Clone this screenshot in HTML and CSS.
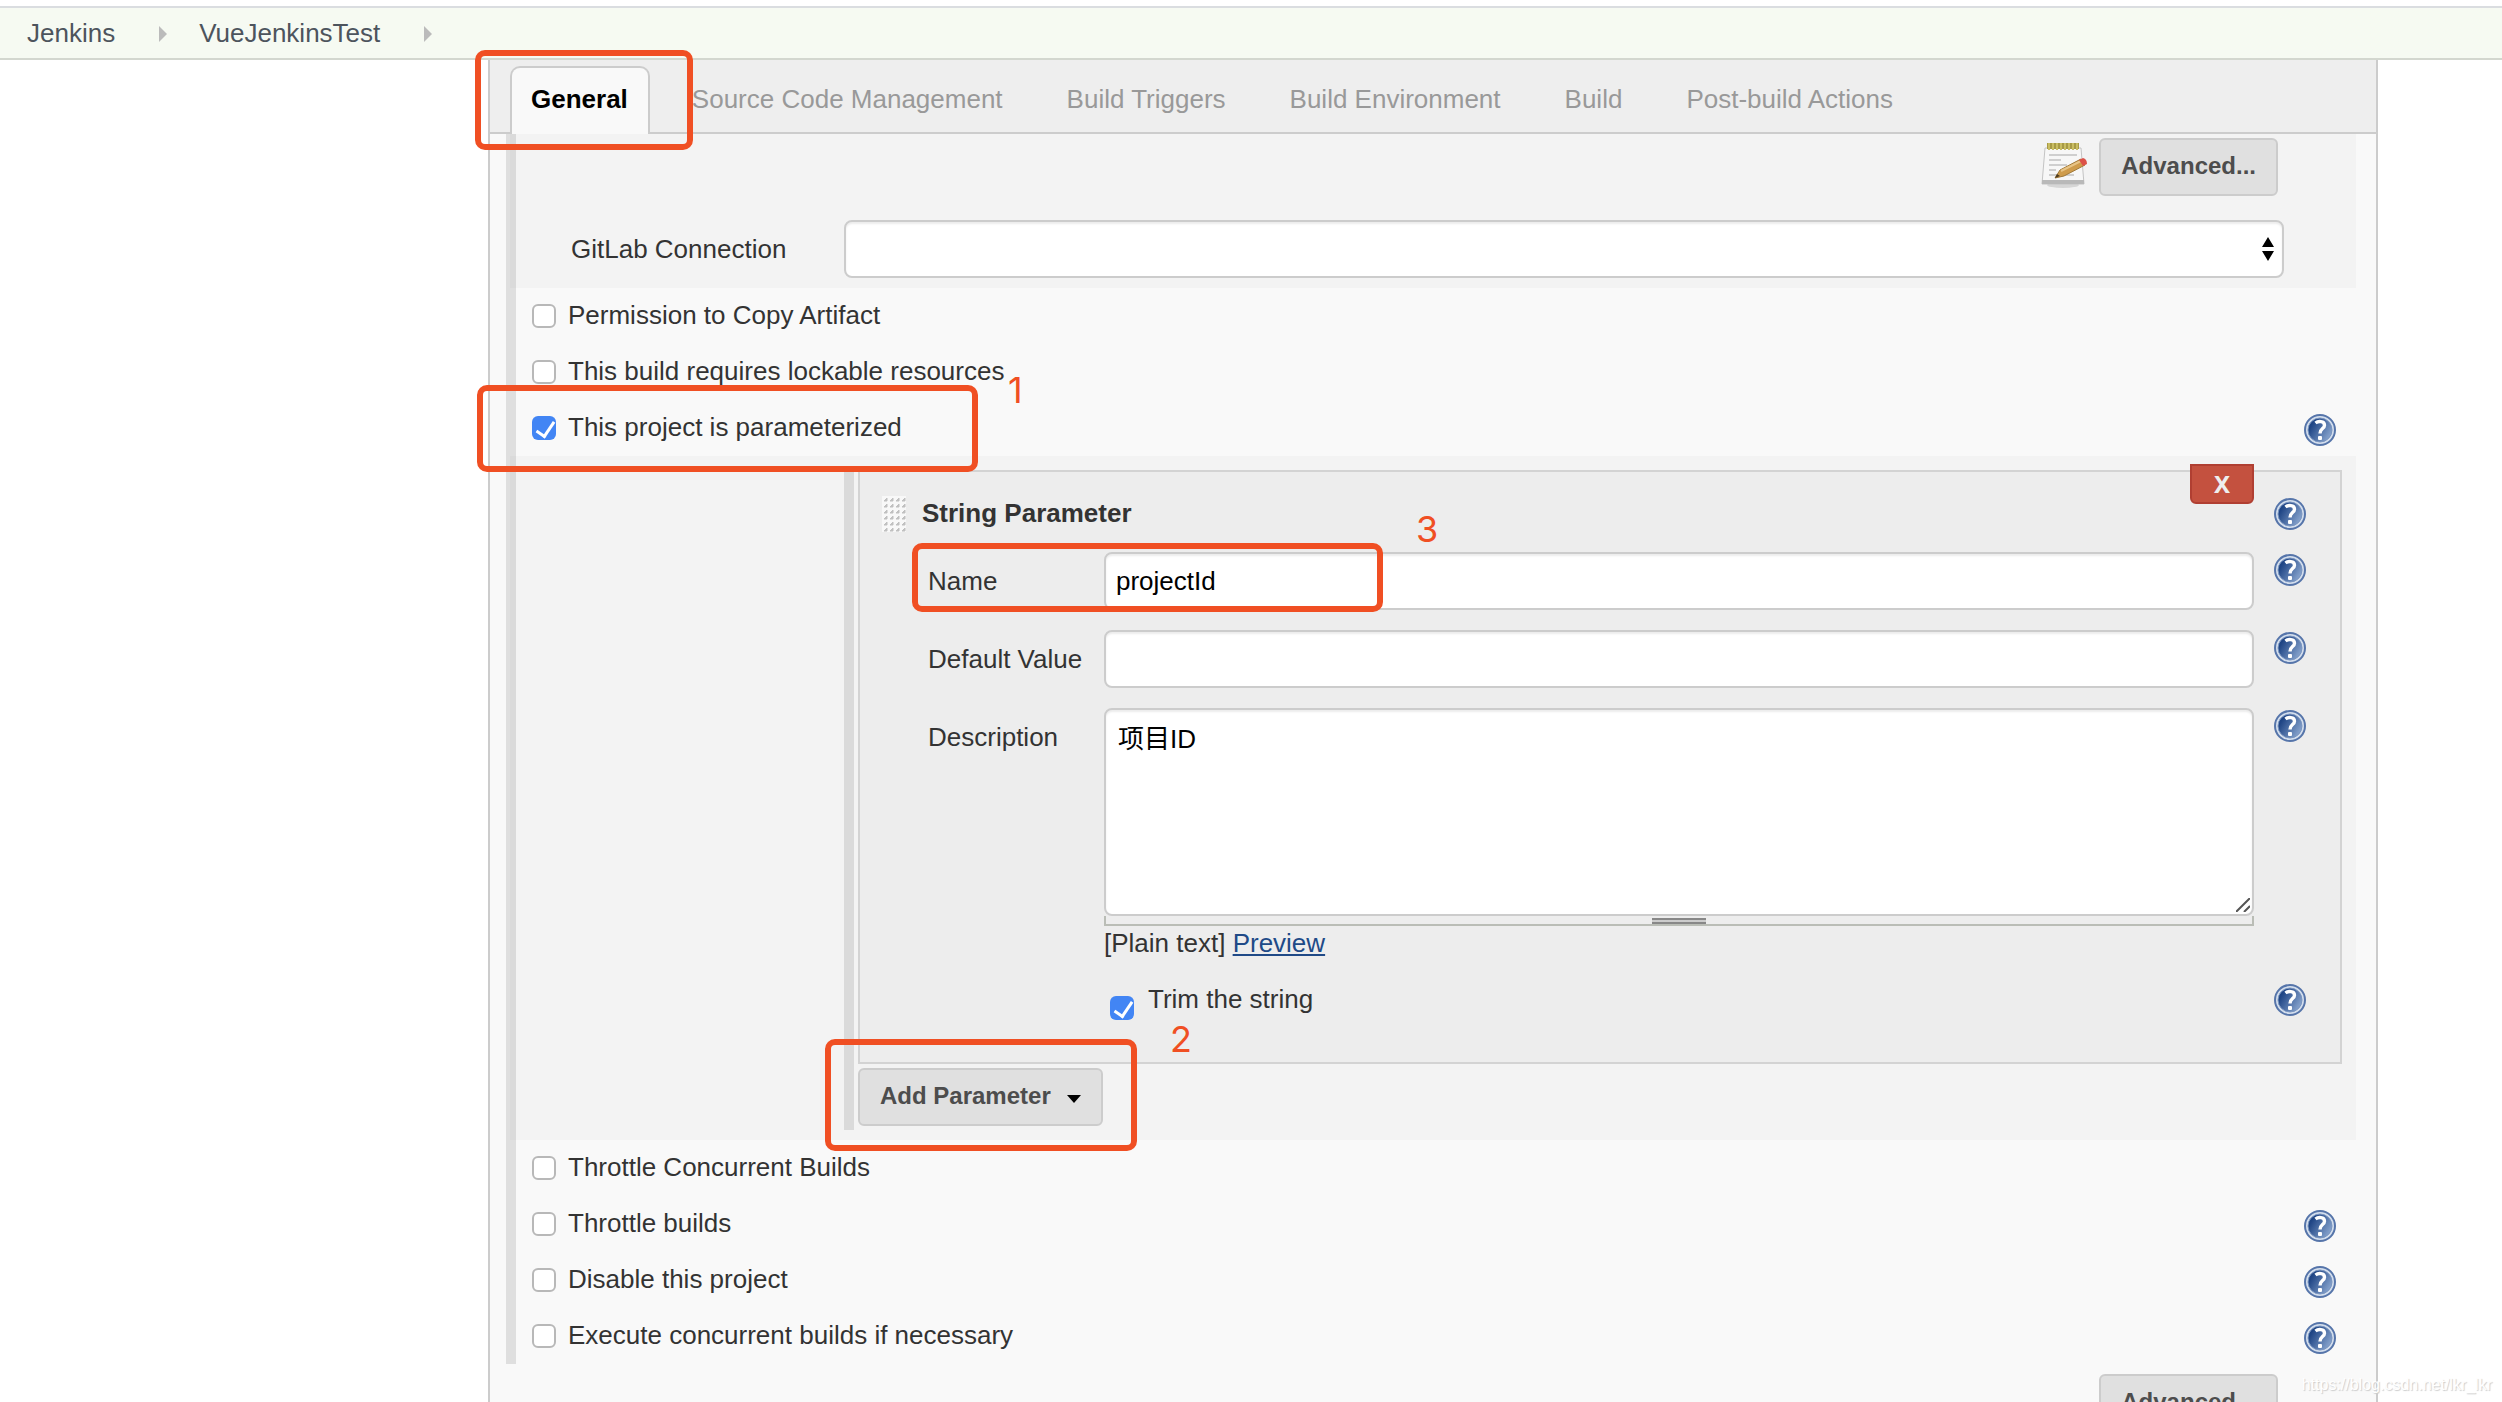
FILE: index.html
```html
<!DOCTYPE html>
<html lang="en">
<head>
<meta charset="utf-8">
<title>VueJenkinsTest Config [Jenkins]</title>
<link rel="stylesheet" href="styles.css">
</head>
<body>
<svg class="defs" aria-hidden="true">
  <defs>
    <linearGradient id="help-fill" x1="0" y1="0.2" x2="1" y2="0.8">
      <stop offset="0.15" stop-color="#1f4585"/>
      <stop offset="1" stop-color="#8fabd3"/>
    </linearGradient>
    <symbol id="help" viewBox="0 0 32 32">
      <circle cx="16" cy="16" r="15" fill="#d3deed" stroke="#5675aa" stroke-width="2"/>
      <circle cx="16" cy="16" r="12" fill="url(#help-fill)" stroke="#7a95c0" stroke-width="1"/>
      <path d="M11.500 9C14 7 20.500 6.600 20.500 11.200C20.500 14.800 16 14.500 16 19.500" fill="none" stroke="#fff" stroke-width="3.400"/>
      <rect x="14" y="22" width="4" height="4" rx="1" fill="#fff"/>
    </symbol>
  </defs>
</svg>

<nav class="breadcrumbs" aria-label="Breadcrumb">
  <a href="#">Jenkins</a>
  <svg class="crumb-arrow" viewBox="0 0 8 16" aria-hidden="true"><path d="M0 0L8 8L0 16Z"/></svg>
  <a href="#">VueJenkinsTest</a>
  <svg class="crumb-arrow" viewBox="0 0 8 16" aria-hidden="true"><path d="M0 0L8 8L0 16Z"/></svg>
</nav>

<main class="page">
  <form class="config">
    <nav class="tabs" aria-label="Sections">
      <a class="tab tab-active" href="#general">General<span class="mark mark-tab"></span></a>
      <a class="tab" href="#scm">Source Code Management</a>
      <a class="tab" href="#triggers">Build Triggers</a>
      <a class="tab" href="#env">Build Environment</a>
      <a class="tab" href="#build">Build</a>
      <a class="tab" href="#post">Post-build Actions</a>
    </nav>

    <div class="section" id="general">
      <div class="group">
        <div class="advanced-row">
          <svg class="notepad" viewBox="0 0 46 46" aria-hidden="true">
            <ellipse cx="22" cy="43" rx="16" ry="3" fill="#d6d6d6"/>
            <path d="M4 6H40L43 42H1Z" fill="#f7f7f7" stroke="#c4c4c4"/>
            <path d="M1 38H43V42H1Z" fill="#b9b9b9"/>
            <path d="M6 1H38V7H6Z" fill="#a79a45"/>
            <path d="M8 8V1M12 8V1M16 8V1M20 8V1M24 8V1M28 8V1M32 8V1M36 8V1" stroke="#c9bd62" stroke-width="2"/>
            <path d="M8 13H36M8 18H20M8 23H26M8 28H15M8 33H33" stroke="#cfcfcf" stroke-width="2"/>
            <path d="M14 36L19 28L40 17L44 23L23 34Z" fill="#cf9c4c" stroke="#a07838"/>
            <path d="M14 36L16 32L19 34Z" fill="#4b3a20"/>
            <path d="M20 29L40 19" stroke="#e8c486" stroke-width="2"/>
            <path d="M38 18L42 16Q46 17 46 22L42 24Z" fill="#dc5148"/>
          </svg>
          <button type="button" class="button">Advanced...</button>
        </div>
        <div class="select-row">
          <label for="gitlab">GitLab Connection</label>
          <div class="select-wrap">
            <select class="field" id="gitlab"><option></option></select>
            <svg class="select-arrows" viewBox="0 0 12 24" aria-hidden="true"><path d="M0 10H12L6 0ZM0 14H12L6 24Z"/></svg>
          </div>
        </div>
      </div>

      <div class="option"><label><input type="checkbox">Permission to Copy Artifact</label></div>
      <div class="option"><label><input type="checkbox">This build requires lockable resources</label></div>
      <div class="option">
        <label><input type="checkbox" checked>This project is parameterized</label>
        <a class="help" href="#" aria-label="Help"><svg><use href="#help"/></svg></a>
        <span class="mark mark-option"></span>
        <span class="number number-one">1</span>
      </div>

      <div class="group parameters">
        <div class="parameters-body">
          <div class="card">
            <button type="button" class="delete">X</button>
            <div class="card-title">
              <svg class="grip" viewBox="0 0 24 36" aria-hidden="true">
                <defs><pattern id="dots" width="6" height="6" patternUnits="userSpaceOnUse"><rect width="6" height="6" fill="#f8f8f8"/><path d="M5 2V5H2Z" fill="#c0c0c0" stroke="#c0c0c0"/></pattern></defs>
                <rect width="24" height="36" fill="url(#dots)"/>
              </svg>
              <h2>String Parameter</h2>
              <a class="help" href="#" aria-label="Help"><svg><use href="#help"/></svg></a>
            </div>
            <div class="row">
              <label for="name">Name</label>
              <input class="field" id="name" type="text" value="projectId">
              <a class="help" href="#" aria-label="Help"><svg><use href="#help"/></svg></a>
              <span class="mark mark-name"></span>
              <span class="number number-three">3</span>
            </div>
            <div class="row">
              <label for="default">Default Value</label>
              <input class="field" id="default" type="text">
              <a class="help" href="#" aria-label="Help"><svg><use href="#help"/></svg></a>
            </div>
            <div class="row row-description">
              <label for="description">Description</label>
              <div class="description">
                <div class="textarea-wrap">
                  <textarea class="field" id="description">项目ID</textarea>
                  <svg class="resizer" viewBox="0 0 14 14" aria-hidden="true"><path d="M0 14L14 0M8 14L14 8"/></svg>
                </div>
                <div class="drag-bar"><span></span></div>
                <div class="format">[Plain text] <a href="#">Preview</a></div>
              </div>
              <a class="help" href="#" aria-label="Help"><svg><use href="#help"/></svg></a>
            </div>
            <div class="row row-trim">
              <label class="trim"><input type="checkbox" checked>Trim the string</label>
              <a class="help" href="#" aria-label="Help"><svg><use href="#help"/></svg></a>
            </div>
          </div>
          <div class="add">
            <button type="button" class="button">Add Parameter<svg class="caret" viewBox="0 0 14 8" aria-hidden="true"><path d="M0 0H14L7 8Z"/></svg></button>
            <span class="mark mark-add"></span>
            <span class="number number-two">2</span>
          </div>
        </div>
      </div>

      <div class="option"><label><input type="checkbox">Throttle Concurrent Builds</label></div>
      <div class="option"><label><input type="checkbox">Throttle builds</label><a class="help" href="#" aria-label="Help"><svg><use href="#help"/></svg></a></div>
      <div class="option"><label><input type="checkbox">Disable this project</label><a class="help" href="#" aria-label="Help"><svg><use href="#help"/></svg></a></div>
      <div class="option"><label><input type="checkbox">Execute concurrent builds if necessary</label><a class="help" href="#" aria-label="Help"><svg><use href="#help"/></svg></a></div>
    </div>
    <div class="footer-row"><button type="button" class="button">Advanced...</button></div>
  </form>
</main>
<div class="watermark">https://blog.csdn.net/lkr_lkr</div>
</body>
</html>
```

FILE: styles.css
```css
* { box-sizing: border-box; }

body {
  margin: 0;
  padding-top: 6px;
  height: 100vh;
  overflow: hidden;
  display: flex;
  flex-direction: column;
  background: #fff;
  color: #333;
  font: 26px/36px "Liberation Sans", "Noto Sans CJK SC", Arial, sans-serif;
}

.defs { position: absolute; width: 0; height: 0; }

.breadcrumbs {
  flex: none;
  display: flex;
  align-items: center;
  height: 54px;
  padding: 0 27px;
  border-top: 2px solid #dadde0;
  border-bottom: 2px solid #d3d7cf;
  background: #f6faf2;
}
.breadcrumbs a { color: #4d545d; text-decoration: none; }
.crumb-arrow { width: 8px; height: 16px; margin: 2px 32px 0 44px; fill: #bbb; }

.page { flex: 1; min-height: 0; padding: 0 124px 0 488px; }

.config {
  min-height: 100%;
  border: 2px solid #ccc;
  border-width: 0 2px;
  background: #f9f9f9;
}

.tabs {
  display: flex;
  height: 74px;
  padding: 6px 20px 0;
  border-bottom: 2px solid #ccc;
  background: #eee;
}
.tab {
  padding: 15px 22px 0;
  margin-right: 20px;
  color: #999;
  text-decoration: none;
}
.tab-active {
  position: relative;
  height: 68px;
  padding: 13px 20px 0 19px;
  border: 2px solid #ccc;
  border-bottom: 0;
  border-radius: 10px 10px 0 0;
  background: #f9f9f9;
  color: #000;
  font-weight: bold;
}

.section { position: relative; padding: 0 20px; }
.section::before {
  content: "";
  position: absolute;
  inset: 0 auto 0 16px;
  width: 10px;
  background: rgba(0, 0, 0, 0.1);
}

.group { background: #f3f3f3; padding-bottom: 10px; }

.advanced-row { display: flex; justify-content: flex-end; gap: 12px; padding: 4px 78px 24px 0; }
.notepad { width: 46px; height: 46px; margin-top: 4px; }

.button {
  display: flex;
  align-items: center;
  height: 58px;
  padding: 0 20px 2px;
  border: 2px solid #ccc;
  border-radius: 6px;
  background: #e0e0e0;
  color: #4d4d4d;
  font: bold 24px/32px "Liberation Sans", Arial, sans-serif;
}

.select-row { display: flex; align-items: center; padding: 0 72px 0 61px; }
.select-row label { width: 273px; }
.select-wrap { position: relative; flex: 1; }
.select-arrows { position: absolute; top: 17px; right: 10px; width: 12px; height: 24px; }

.field {
  display: block;
  width: 100%;
  height: 58px;
  padding: 0 10px;
  border: 2px solid #ccc;
  border-radius: 8px;
  background: #fff;
  box-shadow: inset 0 2px 2px rgba(0, 0, 0, 0.08);
  color: #000;
  font: inherit;
  appearance: none;
}

.option {
  position: relative;
  display: flex;
  justify-content: space-between;
  height: 56px;
  padding: 9px 20px 0 22px;
}
.option label { display: flex; gap: 12px; }

input[type="checkbox"] {
  appearance: none;
  width: 24px;
  height: 24px;
  margin: 7px 0 0;
  border: 2px solid #b8b8b8;
  border-radius: 6px;
  background: #fff;
}
input[type="checkbox"]:checked {
  border: 0;
  background: #4285f4;
}
input[type="checkbox"]:checked::before {
  content: "";
  display: block;
  width: 8px;
  height: 16px;
  margin: 2px 0 0 8px;
  border: solid #fff;
  border-width: 0 3px 3px 0;
  transform: rotate(34deg);
}

.help { display: block; width: 32px; height: 32px; margin-top: 5px; }
.help svg { display: block; width: 32px; height: 32px; }

.parameters { padding: 14px 14px 10px 334px; }
.parameters-body { position: relative; padding-left: 14px; }
.parameters-body::before {
  content: "";
  position: absolute;
  inset: 0 auto 0 0;
  width: 10px;
  background: rgba(0, 0, 0, 0.1);
}

.card {
  position: relative;
  height: 594px;
  padding: 22px 34px 0 22px;
  border: 2px solid #d3d3d3;
  background: #ededed;
}
.card-title { display: flex; align-items: center; height: 40px; margin-bottom: 18px; }
.card-title h2 { flex: 1; margin: 0 0 0 16px; padding-bottom: 2px; font-size: 26px; line-height: 36px; }
.card-title .help { margin: 0; }
.grip { width: 24px; height: 36px; }

.delete {
  position: absolute;
  top: -8px;
  right: 86px;
  width: 64px;
  height: 40px;
  padding: 0;
  border: 2px solid #b03f32;
  border-radius: 0 0 6px 6px;
  background: #c4513f;
  color: #eee;
  font: bold 24px/32px "Noto Sans", sans-serif;
}

.row {
  position: relative;
  display: grid;
  grid-template-columns: 176px 1fr 32px;
  margin-bottom: 20px;
  padding-left: 46px;
}
.row label { padding-top: 11px; }
.row .help { margin: 2px 0 0; }
.row .field { width: auto; margin-right: 20px; }
.row-description { margin-bottom: 16px; }
.textarea-wrap { position: relative; margin-right: 20px; }
.textarea-wrap .field { width: 100%; height: 208px; margin: 0; padding: 11px 12px; resize: none; }
.resizer { position: absolute; right: 4px; bottom: 4px; width: 14px; height: 14px; fill: none; stroke: #555; stroke-width: 2; }
.drag-bar {
  display: flex;
  justify-content: center;
  height: 10px;
  margin-right: 20px;
  padding-top: 2px;
  border: 2px solid #babdb6;
  border-top: 0;
}
.drag-bar span { width: 54px; height: 6px; border: solid #888; border-width: 2px 0; background: #ccc; }
.format { margin-top: -1px; line-height: 36px; }
.format a { color: #204a87; }
.row .trim { grid-column: 2; display: flex; gap: 14px; padding: 4px 0 0 6px; }
.trim input[type="checkbox"] { margin-top: 15px; }
.row-trim .help { margin-top: 7px; }

.add { position: relative; display: flex; padding: 4px 0; }
.caret { width: 14px; height: 8px; margin: 6px 0 0 16px; }

.footer-row { display: flex; justify-content: flex-end; padding: 10px 98px 0; }

/* Numbered callouts drawn over the form */
.mark {
  position: absolute;
  z-index: 1;
  border: 6px solid #f04f23;
  border-radius: 10px;
  pointer-events: none;
}
.mark-tab { top: -18px; left: -37px; width: 218px; height: 100px; }
.mark-option { top: -15px; left: -33px; width: 501px; height: 87px; }
.mark-name { top: -9px; left: 30px; width: 471px; height: 69px; }
.mark-add { top: -25px; left: -33px; width: 312px; height: 112px; }

.number {
  position: absolute;
  z-index: 1;
  color: #f04f23;
  font: 36px/40px Inter, "Liberation Sans", sans-serif;
}
.number-one { top: -30px; left: 498px; }
.number-two { top: -45px; left: 312px; }
.number-three { top: -43px; left: 534px; }

.watermark {
  position: absolute;
  right: 10px;
  bottom: 7px;
  color: #fff;
  font: 16px/20px "Liberation Sans", Arial, sans-serif;
  text-shadow: 1px 1px 1px #ccc;
}
```
